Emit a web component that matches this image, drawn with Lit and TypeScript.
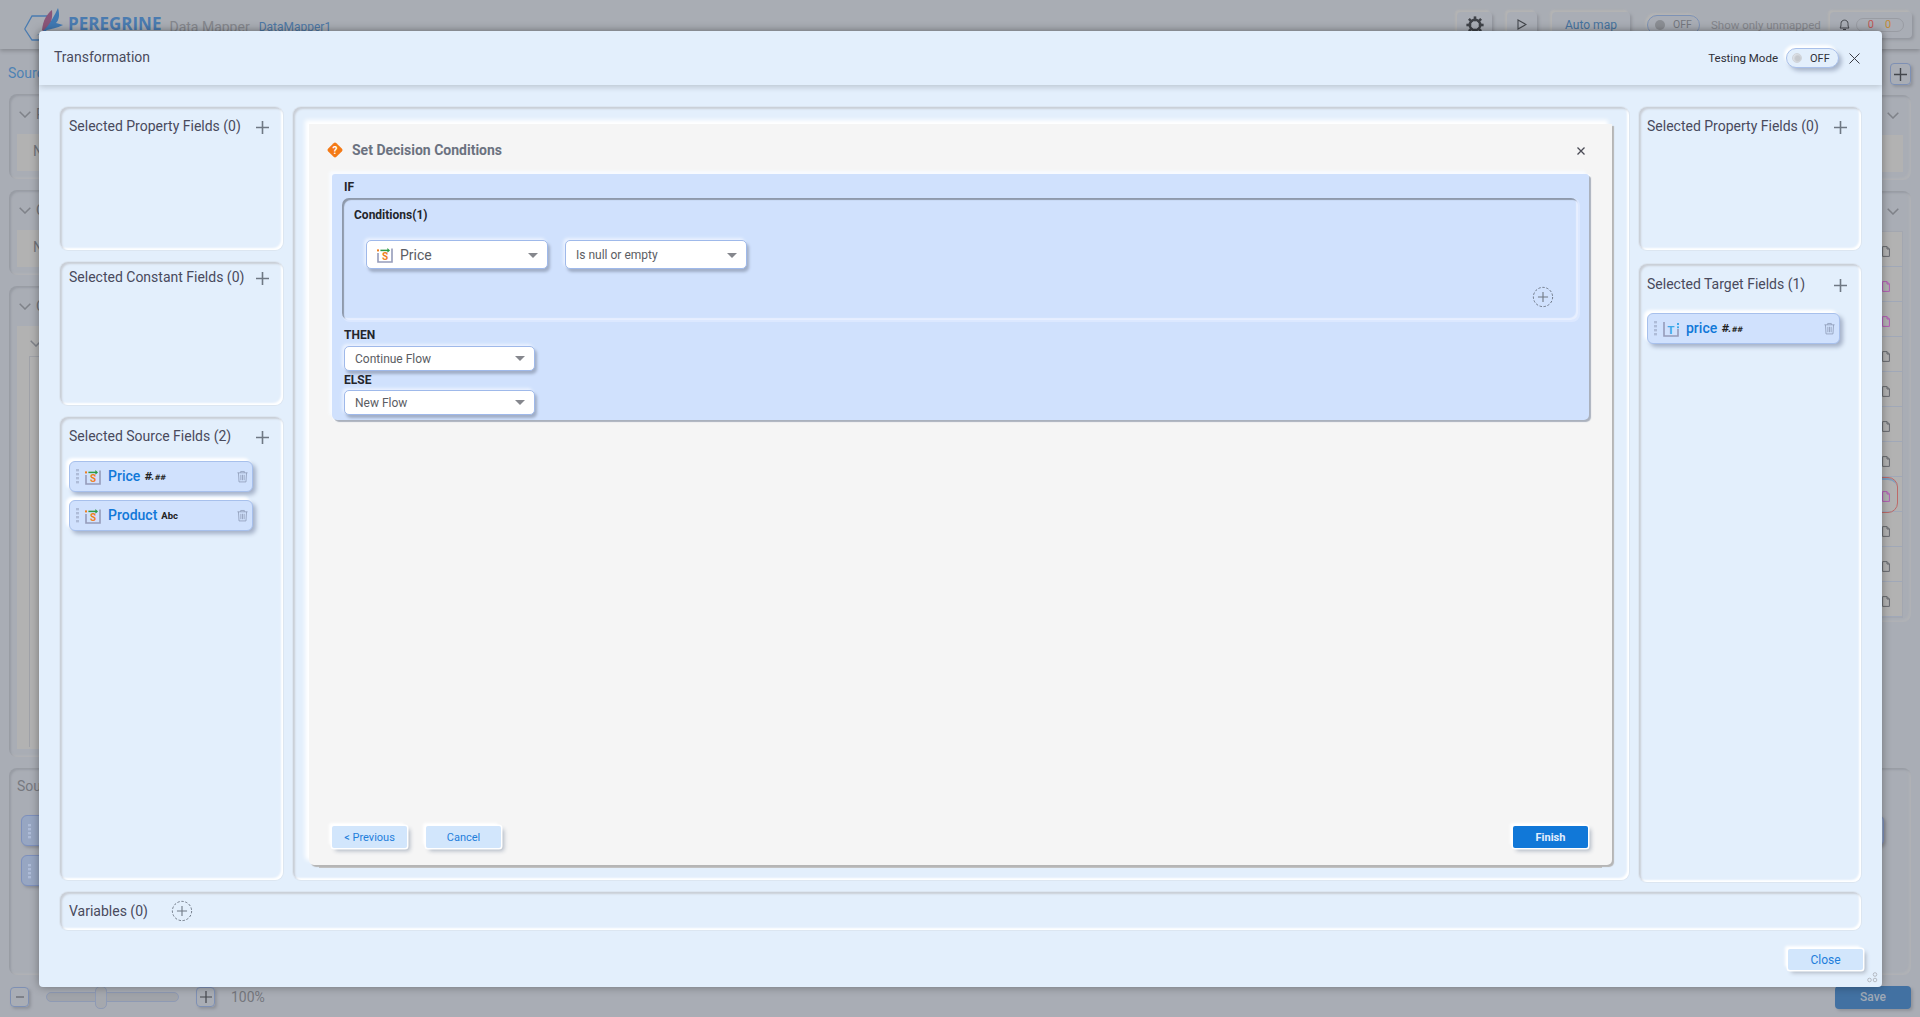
import { LitElement, html, css, svg } from "lit";
import { customElement } from "lit/decorators.js";

const plus = html`<svg class="plus" viewBox="0 0 13 13"><path d="M6.5 0V13M0 6.5H13" stroke="#6f7884" stroke-width="1.6" fill="none"/></svg>`;
const addCircle = html`<svg class="add-circle" viewBox="0 0 24 24"><circle cx="12" cy="12" r="10.5" fill="none" stroke="#5a6270" stroke-width="0.9" stroke-dasharray="2.6 1.8"/><path d="M12 6.5V17.5M6.5 12H17.5" stroke="#6f7884" stroke-width="1.2"/></svg>`;
const dots = html`<svg class="dots" viewBox="0 0 3 15"><g fill="#aebcd8"><rect y="0" width="3" height="2.4"/><rect y="4" width="3" height="2.4"/><rect y="8" width="3" height="2.4"/><rect y="12" width="3" height="2.4"/></g></svg>`;
const trash = html`<svg class="trash" viewBox="0 0 12 13"><path d="M0.5 2.5H11.5M4 2.5V1H8V2.5M1.6 2.5L2.2 12.4H9.8L10.4 2.5M4.2 4.6V10.6M6 4.6V10.6M7.8 4.6V10.6" fill="none" stroke="#8f9db9" stroke-width="0.9"/></svg>`;
const srcIcon = html`<svg class="ficon" viewBox="0 0 16 16"><path d="M1 6V15H15V1.5" fill="none" stroke="#959cba" stroke-width="1.6"/><rect x="0" y="2.4" width="2" height="2" fill="#f07f1c"/><path d="M3.4 3.4H11" stroke="#2f9a45" stroke-width="1.5"/><path d="M10.4 1L13 3.4L10.4 5.8Z" fill="#2f9a45"/><text x="5.1" y="13.2" font-family="Roboto, sans-serif" font-size="10" font-weight="700" fill="#f07f1c">S</text></svg>`;
const tgtIcon = html`<svg class="ficon" viewBox="0 0 16 16"><path d="M1 1V15H15V8" fill="none" stroke="#959cba" stroke-width="1.6"/><rect x="14" y="2" width="2" height="2" fill="#3fa9e8"/><rect x="14" y="5.4" width="2" height="1.8" fill="#3fa9e8"/><text x="4.2" y="13" font-family="Roboto, sans-serif" font-size="11.5" font-weight="700" fill="#3fa9e8">T</text></svg>`;
const question = html`<svg class="qicon" viewBox="0 0 16 16"><rect x="2.2" y="2.2" width="11.6" height="11.6" rx="2" transform="rotate(45 8 8)" fill="#f47a16"/><text x="8" y="11.6" text-anchor="middle" font-family="Roboto, sans-serif" font-size="10" font-weight="700" fill="#fff">?</text></svg>`;
const chevron = html`<svg class="chev" viewBox="0 0 12 7"><path d="M0.7 0.7L6 6L11.3 0.7" fill="none" stroke="#7f8289" stroke-width="1.5"/></svg>`;
const gear = html`<svg class="gear" viewBox="0 0 18 18"><circle cx="9" cy="9" r="5.2" fill="none" stroke="#3f4248" stroke-width="2.6"/><g stroke="#3f4248" stroke-width="2.6">${[0, 45, 90, 135].map((a) => svg`<path d="M9 0.4V17.6" transform="rotate(${a} 9 9)"/>`)}</g><circle cx="9" cy="9" r="3.8" fill="#a9adb5"/></svg>`;
const fileIcon = (pink: boolean) => html`<svg class="file ${pink ? "pink" : ""}" viewBox="0 0 8 11"><path d="M0.6 0.6H5L7.4 3V10.4H0.6ZM5 0.6V3H7.4" fill="none"/></svg>`;

const rows = [false, true, true, false, false, false, false, true, false, false, false];

@customElement("app-root")
export class AppRoot extends LitElement {
  static styles = css`
    :host { display: block; width: 100%; height: 100vh; overflow: hidden; position: relative; font-family: Roboto, "Liberation Sans", sans-serif; color: #494a5c; }
    * { box-sizing: border-box; }

    /* dimmed page behind the dialog */
    .page { height: 100%; background: #a9adb5; display: flex; flex-direction: column; }
    .topbar { height: 49px; flex: none; display: flex; align-items: center; padding: 0 8px 0 24px; box-shadow: 0 2px 4px rgba(0,0,0,.2); background: #a9adb4; z-index: 1; }
    .logo { width: 40px; height: 33px; flex: none; }
    .brand { font-family: "Open Sans", sans-serif; font-weight: 700; font-size: 17px; color: #4a7bb0; margin-left: 4px; margin-top: -3px; }
    .appname { font-size: 14px; color: #85878d; margin-left: 8px; margin-top: 5px; }
    .docname { font-size: 12px; color: #4d78a6; margin-left: 9px; margin-top: 5px; }
    .tools { margin-left: auto; display: flex; align-items: center; }
    .tool { height: 26px; border-radius: 4px; background: #a9adb5; box-shadow: -2px -2px 2px #b4b4b4, 2px 2px 3px #93969e; display: flex; align-items: center; justify-content: center; }
    .t-gear { width: 35px; }
    .gear { width: 18px; height: 18px; }
    .t-play { width: 30px; margin-left: 15px; }
    .t-auto { width: 78px; margin-left: 15px; font-size: 12px; color: #46739f; }
    .t-tog { width: 53px; height: 20px; margin-left: 17px; border-radius: 10px; border: 1px solid #7d92b5; font-size: 10.5px; color: #74777e; gap: 8px; box-shadow: -2px -2px 2px #b4b4b4; }
    .t-knob { width: 10px; height: 10px; border-radius: 50%; background: #8b8e94; }
    .t-show { font-size: 11.5px; color: #85878d; margin-left: 11px; width: 119px; }
    .t-bell { width: 82px; gap: 6px; }
    .bell { width: 11px; height: 13px; }
    .counts { width: 48px; height: 14px; border-radius: 7px; border: 1px solid #999ca3; display: flex; justify-content: space-evenly; font-size: 11px; line-height: 12px; }
    .c-r { color: #c05a55; } .c-o { color: #c28a35; }

    .main { flex: 1; display: flex; flex-direction: column; padding: 0 9px; min-height: 0; }
    .heading { height: 45px; flex: none; display: flex; align-items: flex-start; justify-content: space-between; }
    .heading-t { font-size: 14px; color: #4e82b4; margin-top: 16px; margin-left: -1px; }
    .sq { width: 21px; height: 22px; margin-top: 14px; border: 1px solid #7e90b4; border-radius: 4px; display: flex; align-items: center; justify-content: center; box-shadow: 2px 2px 3px #90939b; }
    .sq svg { width: 13px; height: 13px; }
    .cols { height: 663px; flex: none; display: flex; justify-content: space-between; align-items: flex-start; }
    .col { width: 500px; height: 100%; display: flex; flex-direction: column; gap: 11px; }
    .col.right { padding-top: 1px; }
    .bp { border-radius: 8px; box-shadow: inset 2px 2px 2px #989ca4, inset -2px -2px 2px #b0b2b6; padding: 12px 8px 8px; display: flex; flex-direction: column; }
    .bp-h { height: 16px; flex: none; display: flex; align-items: center; gap: 5px; font-size: 14px; color: #6f7278; padding-left: 2px; }
    .chev { width: 12px; height: 7px; flex: none; }
    .col.right .bp-h { justify-content: flex-end; padding: 0 4px 0 0; }
    .box { height: 37px; flex: none; margin-top: 12px; background: #b2b2b2; padding: 9px 16px; font-size: 14px; color: #6f7278; }
    .bp.p1 { height: 85px; flex: none; }
    .bp.p3 { flex: 1; }
    .nest { flex: 1; background: #b2b2b2; margin-top: 12px; padding: 14px 12px 2px; display: flex; flex-direction: column; }
    .nest .chev { margin-left: 1px; }
    .nest .in { flex: 1; margin-top: 9px; border: 1px solid #a0a2a8; border-bottom: none; }
    .col.right .bp.p2 { height: 431px; flex: none; }
    .list { margin-top: 12px; flex: none; background: #b2b2b2; border: 1px solid #a3a7b0; }
    .row { height: 35px; border-bottom: 1px solid #a0a8b8; display: flex; align-items: center; justify-content: flex-end; padding: 4px 12px 0 0; position: relative; }
    .row.picked::after { content: ""; position: absolute; right: 4px; top: 0; width: 200px; height: 34px; border: 1.5px solid #bd6a68; border-radius: 10px; box-shadow: inset 0 3px 0 -1px #7e9dbd; }
    .file { width: 8px; height: 11px; stroke: #66696f; stroke-width: 1; }
    .file.pink { stroke: #b25bb6; }
    .bottom { height: 207px; flex: none; margin-top: 11px; border-radius: 8px; box-shadow: inset 2px 2px 2px #989ca4, inset -2px -2px 2px #b0b2b6; padding: 10px 12px 0 8px; display: flex; flex-direction: column; }
    .bottom-t { font-size: 14px; color: #77797f; height: 18px; margin-bottom: 10px; }
    .drag-row { display: flex; justify-content: space-between; padding: 0 15px 0 4px; margin-top: 9px; }
    .drag { width: 300px; height: 31px; border-radius: 6px; border: 1px solid #7d90bd; background: #97a6c2; padding: 8px 0 0 6px; box-shadow: 2px 2px 3px #8d9098; }
    .drag .dots { display: block; }
    .foot { height: 42px; flex: none; display: flex; align-items: center; padding: 2px 9px 0 10px; }
    .zbtn { width: 19px; height: 20px; border: 1px solid #7e90b4; border-radius: 4px; display: flex; align-items: center; justify-content: center; box-shadow: 2px 2px 3px #90939b; }
    .zbtn svg { width: 12px; height: 12px; }
    .track { width: 133px; height: 10px; margin: 0 17px; border: 1px solid #8e9ab4; border-radius: 5px; background: #a0a3a9; display: flex; align-items: center; padding-left: 48px; }
    .thumb { width: 12px; height: 23px; flex: none; border: 1px solid #8e9ab4; border-radius: 5px; background: #a5a8ae; }
    .pct { font-size: 14px; color: #75777d; margin-left: 16px; }
    .save { margin-left: auto; width: 76px; height: 23px; border-radius: 4px; background: #4271a2; color: #9fa9b6; font-size: 12px; font-weight: 500; display: flex; align-items: center; justify-content: center; box-shadow: 2px 2px 3px #90939b; }

    /* dialog */
    .modal { position: absolute; left: 39px; top: 31px; width: 1843px; height: 956px; background: #e3effc; border-radius: 4px; box-shadow: 0 0 10px rgba(0,0,0,.35); display: flex; flex-direction: column; z-index: 2; }
    .m-head { height: 54px; flex: none; display: flex; align-items: center; padding: 0 22px 0 15px; box-shadow: 0 2px 6px rgba(0,0,0,.18); border-radius: 4px 4px 0 0; font-size: 14px; color: #4a4b5c; }
    .m-title { flex: 1; margin-top: -2px; }
    .tm { font-size: 11.5px; color: #2f3038; }
    .toggle { width: 53px; height: 20px; margin-left: 8px; border: 1px solid #a9c0ea; border-radius: 10px; background: #e3effc; box-shadow: -2px -3px 3px #fff, 3px 3px 4px #a9b6cb; display: flex; align-items: center; padding-left: 5px; font-size: 11px; color: #2f3038; gap: 8px; }
    .knob { width: 10px; height: 10px; border-radius: 50%; background: radial-gradient(circle at 60% 55%, #c6c9ce 0 35%, #dfe3e9 70%); border: 1px solid #d0d4da; flex: none; }
    .xbig { width: 11px; height: 11px; margin-left: 10px; }
    .m-body { height: 775px; margin-top: 22px; flex: none; padding: 0 21px; display: grid; grid-template-columns: 223px 1fr 222px; column-gap: 10px; }
    .inset { border-radius: 8px; box-shadow: inset 2px 2px 2px #c9ced6, inset -2px -2px 2px #fff, 0 0 0 1px rgba(215,222,232,.55); }
    .col-l { display: flex; flex-direction: column; gap: 12px; margin-bottom: 2px; }
    .col-r { display: flex; flex-direction: column; gap: 14px; }
    .fp { padding: 10px 14px 10px 8px; }
    .col-l .fp { padding-left: 9px; }
    .fp.tight { padding-top: 6px; }
    .col-r .fp.grow { padding-top: 11px; }
    .fp.h143 { height: 143px; flex: none; }
    .fp.grow { flex: 1; }
    .fp-h { height: 18px; display: flex; align-items: center; justify-content: space-between; font-size: 14px; }
    .plus { width: 13px; height: 13px; flex: none; margin-top: 2px; }
    .chips { margin-top: 16px; display: flex; flex-direction: column; gap: 8px; width: 184px; }
    .col-r .chips { margin-top: 20px; width: 193px; }
    .chip { height: 31px; border: 1px solid #a7c0ec; border-radius: 6px; background: #d0e1fd; box-shadow: -3px -3px 3px #fff, 3px 3px 4px #a5b2c9; display: flex; align-items: center; padding: 0 4px 0 6px; }
    .dots { width: 3px; height: 15px; flex: none; }
    .ficon { width: 16px; height: 16px; flex: none; }
    .chip .ficon { margin-left: 6px; }
    .name { font-size: 14px; font-weight: 500; color: #1178d8; margin-left: 7px; margin-top: -1px; }
    .fmt { font-family: "DejaVu Sans", sans-serif; font-size: 10px; font-weight: 700; color: #222; margin-left: 4px; font-style: italic; }
    .fmt small { font-size: 7.5px; letter-spacing: .4px; }
    .fmt.abc { font-family: Roboto, sans-serif; font-style: normal; font-size: 9.5px; }
    .trash { width: 11px; height: 13px; margin-left: auto; flex: none; }

    .center { display: flex; padding: 17px 17px 15px 16px; margin-bottom: 2px; }
    .wizard { flex: 1; background: #f5f5f5; border-radius: 0 0 5px 5px; display: flex; flex-direction: column; box-shadow: -4px -4px 4px #fff, 2px 2px 1px #b5b5b5, 0 13px 0 -10px #c2c2c2; }
    .w-head { height: 50px; flex: none; display: flex; align-items: center; padding: 2px 27px 0 18px; font-size: 14px; font-weight: 700; color: #6b7280; }
    .qicon { width: 16px; height: 16px; margin-right: 9px; flex: none; }
    .w-title { flex: 1; }
    .xsm { width: 8px; height: 8px; flex: none; margin-top: 2px; }
    .if { margin: 0 23px; height: 246px; flex: none; background: #d0e1fd; border-radius: 3px 3px 5px 5px; box-shadow: -3px -3px 3px #f8fbff, 2px 2px 1px #aab1bd, 1px 1px 0 1px #fff; padding: 0 11px 6px 12px; display: flex; flex-direction: column; font-size: 12px; font-weight: 700; color: #24252b; }
    .lbl-if { height: 24px; line-height: 26px; }
    .lbl-then { height: 25px; padding-top: 6px; line-height: 18px; }
    .lbl-else { height: 19px; line-height: 21px; }
    .cond { height: 122px; flex: none; border-radius: 7px; box-shadow: inset 2px 2px 1px #8e99ab, inset -2px -2px 1px #e7efff, 1px 1px 0 1px #dce8ff; padding: 10px 24px 12px 12px; display: flex; flex-direction: column; margin-left: -2px; }
    .c-row { display: flex; gap: 17px; margin-top: 18px; margin-left: 12px; }
    .add-circle { width: 22px; height: 22px; flex: none; }
    .cond .add-circle { margin-top: auto; align-self: flex-end; }
    .sel { height: 25px; width: 191px; background: #fff; border: 1px solid #9fb9ea; border-radius: 5px; box-shadow: -2px -2px 3px #eaf2ff, 2px 3px 3px #9fadc6; display: flex; align-items: center; padding: 0 9px 0 10px; font-size: 12px; font-weight: 400; color: #5b5d63; }
    .if > .sel { margin-top: 1px; margin-bottom: -1px; }
    .sel.tall { height: 29px; width: 182px; padding-top: 1px; }
    .sel .ficon { margin-right: 7px; margin-left: 0; }
    .sel.big { font-size: 14px; }
    .caret { width: 0; height: 0; border-left: 5px solid transparent; border-right: 5px solid transparent; border-top: 5px solid #85878d; margin-left: auto; flex: none; }
    .w-foot { margin-top: auto; height: 22px; flex: none; display: flex; padding: 0 24px 0 23px; margin-bottom: 17px; gap: 19px; }
    .btn { height: 22px; width: 75px; border-radius: 2px; background: #d2e6fc; color: #1f7edb; font-size: 11px; display: flex; align-items: center; justify-content: center; box-shadow: 0 0 0 1.5px #fff, -3px -3px 3px #fff, 3px 3px 4px #aeb6c2; }
    .btn.primary { margin-left: auto; width: 75px; background: #1178d8; color: #e4effd; font-weight: 700; }
    .vars { height: 38px; flex: none; margin: 10px 21px 0; display: flex; align-items: center; padding-left: 9px; gap: 23px; font-size: 14px; }
    .m-foot { height: 21px; margin-top: 19px; flex: none; display: flex; justify-content: flex-end; padding-right: 19px; }
    .btn.close { width: 75px; font-size: 12px; height: 21px; }
    .grip { position: absolute; right: 4px; bottom: 4px; width: 11px; height: 11px; }
  `;

  private chip(icon: unknown, name: string, fmt: unknown, abc = false) {
    return html`<div class="chip">${dots}${icon}<span class="name">${name}</span><span class="fmt ${abc ? "abc" : ""}">${fmt}</span>${trash}</div>`;
  }

  private fieldPanel(title: string, cls: string, content: unknown = "") {
    return html`<section class="inset fp ${cls}"><div class="fp-h"><span>${title}</span>${plus}</div>${content}</section>`;
  }

  private backdrop() {
    return html`<div class="page">
      <header class="topbar">
        <svg class="logo" viewBox="0 0 40 33"><path d="M0.7 21L8 8H23L24 18M18 32H8L0.7 21" fill="none" stroke="#4a7bb0" stroke-width="1.3"/><path d="M18 22C19 12 23 6 28 2C29 12 26 19 20 24Z" fill="#8a5578"/><path d="M11 28C20 25 27 15 34 0C36 7 35 12 32 15L39 17C33 20 27 21 23 22C19 25 15 27 11 28Z" fill="#3f78b2"/></svg>
        <span class="brand">PEREGRINE</span><span class="appname">Data Mapper</span><span class="docname">DataMapper1</span>
        <div class="tools">
          <div class="tool t-gear">${gear}</div>
          <div class="tool t-play"><svg width="10" height="11" viewBox="0 0 10 11"><path d="M1 1L9 5.5L1 10Z" fill="none" stroke="#44474d" stroke-width="1.1"/></svg></div>
          <div class="tool t-auto">Auto map</div>
          <div class="tool t-tog"><span class="t-knob"></span>OFF</div>
          <span class="t-show">Show only unmapped</span>
          <div class="tool t-bell"><svg class="bell" viewBox="0 0 11 13"><path d="M1 10C2 9 2 7 2 5.500C2 1 9 1 9 5.500C9 7 9 9 10 10ZM4 11.500H7" fill="none" stroke="#44474d"/></svg><div class="counts"><span class="c-r">0</span><span class="c-o">0</span></div></div>
        </div>
      </header>
      <main class="main">
        <div class="heading"><span class="heading-t">Source</span><div class="sq"><svg viewBox="0 0 13 13"><path d="M6.5 0V13M0 6.5H13" stroke="#44474d" stroke-width="1.4"/></svg></div></div>
        <div class="cols">
          <div class="col">
            <div class="bp p1"><div class="bp-h">${chevron}<span>Pr</span></div><div class="box">No</div></div>
            <div class="bp p1"><div class="bp-h">${chevron}<span>Co</span></div><div class="box">No</div></div>
            <div class="bp p3"><div class="bp-h">${chevron}<span>Ca</span></div><div class="nest">${chevron}<div class="in"></div></div></div>
          </div>
          <div class="col right">
            <div class="bp p1"><div class="bp-h">${chevron}</div><div class="box"></div></div>
            <div class="bp p2"><div class="bp-h">${chevron}</div><div class="list">${rows.map((p, i) => html`<div class="row ${i === 7 ? "picked" : ""}">${fileIcon(p)}</div>`)}</div></div>
          </div>
        </div>
        <div class="bottom">
          <div class="bottom-t">Source</div>
          <div class="drag-row"><div class="drag">${dots}</div><div class="drag"></div></div>
          <div class="drag-row"><div class="drag">${dots}</div></div>
        </div>
      </main>
      <footer class="foot">
        <div class="zbtn"><svg viewBox="0 0 12 12"><path d="M2 6H10" stroke="#6c6f76" stroke-width="1.4"/></svg></div>
        <div class="track"><div class="thumb"></div></div>
        <div class="zbtn"><svg viewBox="0 0 12 12"><path d="M6 0V12M0 6H12" stroke="#44474d" stroke-width="1.2"/></svg></div>
        <span class="pct">100%</span>
        <div class="save">Save</div>
      </footer>
    </div>`;
  }

  private wizard() {
    return html`<div class="wizard">
      <div class="w-head">${question}<span class="w-title">Set Decision Conditions</span><svg class="xsm" viewBox="0 0 8 8"><path d="M.5 .5L7.500 7.500M7.500 .5L.5 7.500" stroke="#4a4b55" stroke-width="1.3"/></svg></div>
      <div class="if">
        <div class="lbl-if">IF</div>
        <div class="cond">
          <div>Conditions(1)</div>
          <div class="c-row">
            <div class="sel tall big">${srcIcon}Price<span class="caret"></span></div>
            <div class="sel tall">Is null or empty<span class="caret"></span></div>
          </div>
          ${addCircle}
        </div>
        <div class="lbl-then">THEN</div>
        <div class="sel">Continue Flow<span class="caret"></span></div>
        <div class="lbl-else">ELSE</div>
        <div class="sel">New Flow<span class="caret"></span></div>
      </div>
      <div class="w-foot"><div class="btn">&lt; Previous</div><div class="btn">Cancel</div><div class="btn primary">Finish</div></div>
    </div>`;
  }

  render() {
    const numeric = html`#<small>.##</small>`;
    return html`${this.backdrop()}
      <div class="modal">
        <div class="m-head">
          <span class="m-title">Transformation</span>
          <span class="tm">Testing Mode</span>
          <div class="toggle"><span class="knob"></span>OFF</div>
          <svg class="xbig" viewBox="0 0 11 11"><path d="M.5 .5L10.500 10.500M10.500 .5L.5 10.500" stroke="#3a3b44" stroke-width="1"/></svg>
        </div>
        <div class="m-body">
          <div class="col-l">
            ${this.fieldPanel("Selected Property Fields (0)", "h143")}
            ${this.fieldPanel("Selected Constant Fields (0)", "h143 tight")}
            ${this.fieldPanel("Selected Source Fields (2)", "grow", html`<div class="chips">${this.chip(srcIcon, "Price", numeric)}${this.chip(srcIcon, "Product", "Abc", true)}</div>`)}
          </div>
          <div class="inset center">${this.wizard()}</div>
          <div class="col-r">
            ${this.fieldPanel("Selected Property Fields (0)", "h143")}
            ${this.fieldPanel("Selected Target Fields (1)", "grow", html`<div class="chips">${this.chip(tgtIcon, "price", numeric)}</div>`)}
          </div>
        </div>
        <div class="inset vars"><span>Variables (0)</span>${addCircle}</div>
        <div class="m-foot"><div class="btn close">Close</div></div>
        <svg class="grip" viewBox="0 0 11 11"><g fill="none" stroke="#a9adb5" stroke-width=".8"><circle cx="8" cy="2.500" r="1.800"/><circle cx="2.500" cy="8" r="1.800"/><circle cx="8" cy="8" r="1.800"/></g></svg>
      </div>`;
  }
}
